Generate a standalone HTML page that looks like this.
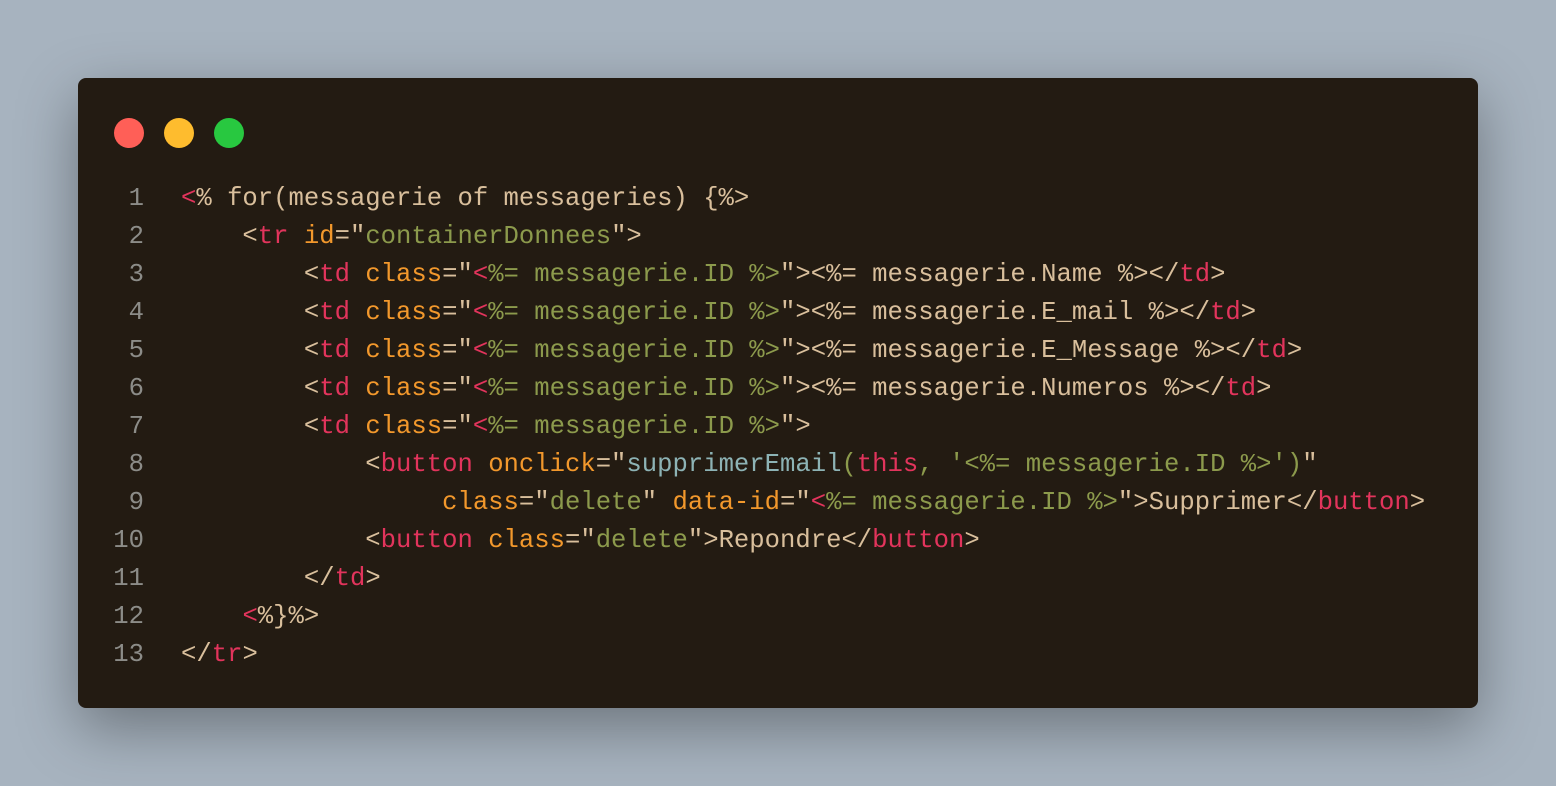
<!DOCTYPE html>
<html><head><meta charset="utf-8"><style>
body{margin:0;width:1556px;height:786px;background:#a7b3bf;position:relative;overflow:hidden}
.win{position:absolute;left:78px;top:78px;width:1400px;height:630px;background:#231b12;border-radius:8px;box-shadow:0 20px 60px rgba(0,0,0,.35)}
.dot{position:absolute;top:40px;width:30px;height:30px;border-radius:50%}
pre{position:absolute;left:0;top:102px;margin:0;font-family:"Liberation Mono",monospace;font-size:25.6px;line-height:38px;color:#d9bf9c}
.n{display:inline-block;width:66px;text-align:right;color:#8c8c88;margin-right:37px}
.r{color:#e2345c}.o{color:#f2982c}.g{color:#8c9a4c}.t{color:#8db3b5}
</style></head><body>
<div class="win">
<div class="dot" style="left:36px;background:#ff5f57"></div>
<div class="dot" style="left:86px;background:#febc2e"></div>
<div class="dot" style="left:136px;background:#28c840"></div>
<pre><span class="n">1</span><span class="r">&lt;</span>% for(messagerie of messageries) {%&gt;
<span class="n">2</span>    &lt;<span class="r">tr</span> <span class="o">id</span>="<span class="g">containerDonnees</span>"&gt;
<span class="n">3</span>        &lt;<span class="r">td</span> <span class="o">class</span>="<span class="r">&lt;</span><span class="g">%= messagerie.ID %&gt;</span>"&gt;&lt;%= messagerie.Name %&gt;&lt;/<span class="r">td</span>&gt;
<span class="n">4</span>        &lt;<span class="r">td</span> <span class="o">class</span>="<span class="r">&lt;</span><span class="g">%= messagerie.ID %&gt;</span>"&gt;&lt;%= messagerie.E_mail %&gt;&lt;/<span class="r">td</span>&gt;
<span class="n">5</span>        &lt;<span class="r">td</span> <span class="o">class</span>="<span class="r">&lt;</span><span class="g">%= messagerie.ID %&gt;</span>"&gt;&lt;%= messagerie.E_Message %&gt;&lt;/<span class="r">td</span>&gt;
<span class="n">6</span>        &lt;<span class="r">td</span> <span class="o">class</span>="<span class="r">&lt;</span><span class="g">%= messagerie.ID %&gt;</span>"&gt;&lt;%= messagerie.Numeros %&gt;&lt;/<span class="r">td</span>&gt;
<span class="n">7</span>        &lt;<span class="r">td</span> <span class="o">class</span>="<span class="r">&lt;</span><span class="g">%= messagerie.ID %&gt;</span>"&gt;
<span class="n">8</span>            &lt;<span class="r">button</span> <span class="o">onclick</span>="<span class="t">supprimerEmail</span><span class="g">(</span><span class="r">this</span><span class="g">, '&lt;%= messagerie.ID %&gt;')</span>"
<span class="n">9</span>                 <span class="o">class</span>="<span class="g">delete</span>" <span class="o">data-id</span>="<span class="r">&lt;</span><span class="g">%= messagerie.ID %&gt;</span>"&gt;Supprimer&lt;/<span class="r">button</span>&gt;
<span class="n">10</span>            &lt;<span class="r">button</span> <span class="o">class</span>="<span class="g">delete</span>"&gt;Repondre&lt;/<span class="r">button</span>&gt;
<span class="n">11</span>        &lt;/<span class="r">td</span>&gt;
<span class="n">12</span>    <span class="r">&lt;</span>%}%&gt;
<span class="n">13</span>&lt;/<span class="r">tr</span>&gt;</pre>
</div>
</body></html>
